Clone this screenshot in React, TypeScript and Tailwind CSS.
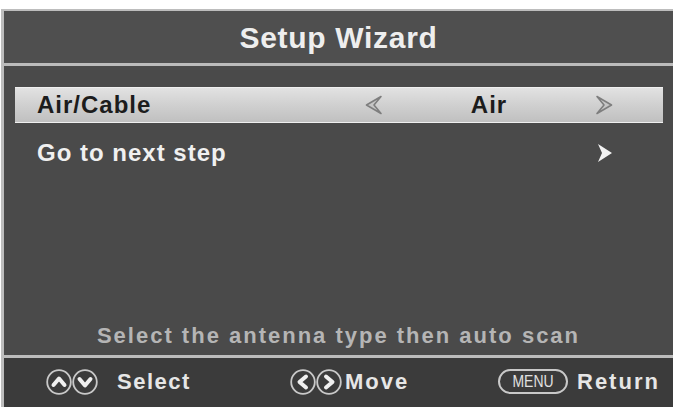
import React from 'react';

function CircleIcon({ dir }: { dir: 'up' | 'down' | 'left' | 'right' }) {
  const paths: Record<string, string> = {
    up: 'M7.5 16 L13 9.5 L18.5 16',
    down: 'M7.5 10 L13 16.5 L18.5 10',
    left: 'M16 7.5 L9.5 13 L16 18.5',
    right: 'M10 7.5 L16.5 13 L10 18.5',
  };
  return (
    <svg width="26" height="26" viewBox="0 0 26 26" className="shrink-0">
      <circle cx="13" cy="13" r="11.8" fill="none" stroke="#c9c9c9" strokeWidth="1.8" />
      <path d={paths[dir]} fill="none" stroke="#f0f0f0" strokeWidth="4" strokeLinecap="round" strokeLinejoin="round" />
    </svg>
  );
}

function HollowArrow({ flip }: { flip?: boolean }) {
  return (
    <svg width="18" height="20" viewBox="0 0 18 20" className={flip ? '-scale-x-100' : ''}>
      <polygon points="16,1.5 1.5,10 16,18.5 9,10" fill="#c6c6c6" stroke="#7e7e7e" strokeWidth="1.6" strokeLinejoin="round" />
    </svg>
  );
}

export default function App() {
  return (
    <div className="w-[673px] h-[407px] bg-white pt-[9px] pl-[1px] font-['Liberation_Sans',Arial,sans-serif] font-bold overflow-hidden">
      <div className="h-[398px] flex flex-col bg-[#4a4a4a] border-l-[3px] border-t-2 border-[#bdbdbd]">
        {/* title */}
        <div className="h-[52px] flex items-center justify-center bg-[#4f4f4f] text-[30px] tracking-[0.7px] text-[#eeeeee]">
          Setup Wizard
        </div>
        <div className="h-[3px] bg-[#bcbcbc]" />

        {/* body */}
        <div className="h-[289px] flex flex-col pt-[21px]">
          <div className="ml-[11px] mr-[10px] h-[36px] flex items-center pl-[22px] border-y border-[#efefef] bg-gradient-to-b from-[#e2e2e2] via-[#d0d0d0] to-[#c0c0c0] text-[24px] tracking-[1px] text-[#1c1c1c]">
            <span className="w-[328px]">Air/Cable</span>
            <span className="w-[18px] flex items-center"><HollowArrow /></span>
            <span className="flex-1 text-center">Air</span>
            <span className="w-[20px] flex items-center"><HollowArrow flip /></span>
            <span className="w-[48px]" />
          </div>
          <div className="ml-[11px] mr-[10px] mt-[12px] h-[36px] flex items-center pl-[22px] text-[24px] tracking-[1px] text-[#f0f0f0]">
            <span className="flex-1">Go to next step</span>
            <svg width="16" height="20" viewBox="0 0 16 20" className="mr-[50px]">
              <polygon points="1,1 15,10 1,19 5,10" fill="#f2f2f2" />
            </svg>
          </div>
          <div className="flex-1" />
          <div className="pb-[8px] text-center text-[22px] leading-[22px] tracking-[2px] text-[#b5b5b5]">
            Select the antenna type then auto scan
          </div>
        </div>
        <div className="h-[3px] bg-[#bcbcbc]" />

        {/* footer */}
        <div className="flex-1 flex items-center bg-[#3b3b3b] pl-[42px] pb-[2px] text-[22px] text-[#e6e6e6]">
          <div className="w-[244px] flex items-center">
            <CircleIcon dir="up" />
            <CircleIcon dir="down" />
            <span className="ml-[19px] tracking-[1.5px]">Select</span>
          </div>
          <div className="w-[208px] flex items-center">
            <CircleIcon dir="left" />
            <CircleIcon dir="right" />
            <span className="ml-[3px] tracking-[2px]">Move</span>
          </div>
          <div className="flex items-center">
            <span className="w-[70px] h-[25px] flex items-center justify-center rounded-full border-2 border-[#c9c9c9] text-[#e0e0e0]">
              <span className="text-[17px] leading-none font-normal scale-x-[0.82]">MENU</span>
            </span>
            <span className="ml-[9px] tracking-[2px]">Return</span>
          </div>
        </div>
      </div>
    </div>
  );
}
